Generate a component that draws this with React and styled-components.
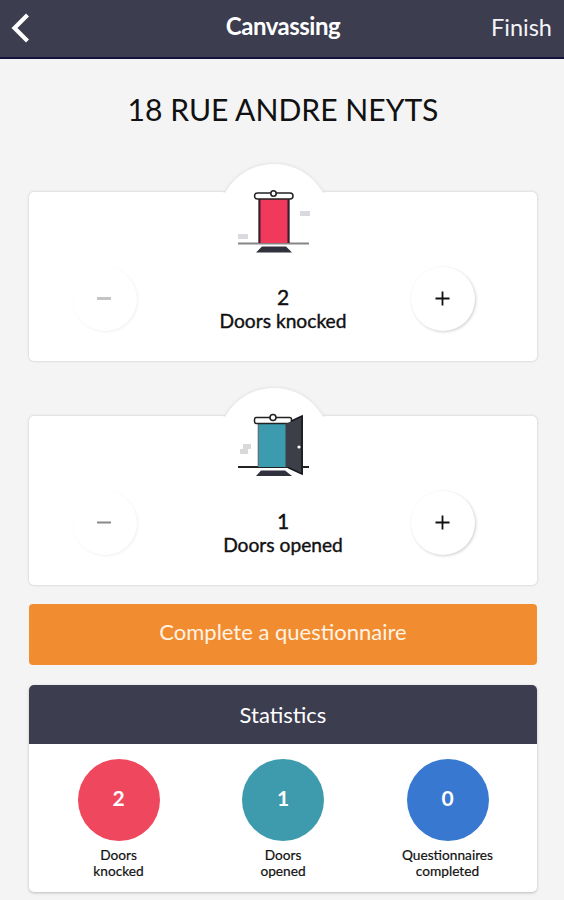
import React, { useState } from "react";
import styled, { createGlobalStyle } from "styled-components";

const GlobalStyle = createGlobalStyle`
  * {
    box-sizing: border-box;
  }
  body {
    margin: 0;
    background: #f4f4f4;
    color: #111;
    font-family: "Lato", "Liberation Sans", sans-serif;
  }
  button {
    font-family: inherit;
    border: none;
    padding: 0;
    cursor: pointer;
  }
`;

const Page = styled.div`
  height: 900px;
  overflow: hidden;
`;
const Header = styled.header`
  display: grid;
  grid-template-columns: 1fr auto 1fr;
  height: 59px;
  padding: 0 12px 0 11px;
  background: #3c3d4f;
  border-bottom: 2px solid #14123c;
  color: #fff;
`;
const BackButton = styled.button`
  justify-self: start;
  height: 55px;
  background: none;

  svg {
    display: block;
  }
`;
const HeaderTitle = styled.h1`
  margin: 0;
  padding-left: 3px;
  font-size: 24px;
  line-height: 51px;
  font-weight: 700;
  letter-spacing: -0.5px;
`;
const FinishButton = styled.button`
  justify-self: end;
  height: 54px;
  background: none;
  color: #f4f4fa;
  font-size: 23.5px;
  line-height: 54px;
`;
const Content = styled.main`
  padding: 0 27px 0 29px;
`;
const Address = styled.h2`
  margin: 0;
  height: 133px;
  font-size: 30.1px;
  line-height: 101px;
  font-weight: 400;
  text-align: center;
`;
const Card = styled.section`
  position: relative;
  height: 169px;
  margin-bottom: ${(props) => props.$gap}px;
  background: #fff;
  border-radius: 5px;
  box-shadow: 0 0 2px 1px #dedede;
`;
const Bubble = styled.div`
  position: absolute;
  top: -30px;
  left: 183px;
  width: 124px;
  height: 31px;
  overflow: hidden;

  &::before {
    content: "";
    display: block;
    width: 112px;
    height: 112px;
    margin: 2px auto 0;
    border-radius: 50%;
    background: #fff;
    box-shadow: 0 0 3px 1px #e4e4e4;
  }
`;
const DoorIcon = styled.svg`
  position: relative;
  display: block;
  margin: 0 auto;
  left: -9px;
  top: -5px;
`;
const CounterRow = styled.div`
  display: grid;
  grid-template-columns: 64px 1fr 64px;
  align-items: start;
  padding: 7px 62px 0 44px;
`;
const RoundButton = styled.button`
  display: flex;
  align-items: center;
  justify-content: center;
  width: 64px;
  height: 64px;
  border-radius: 50%;
  background: #fff;
  box-shadow: 1px 1px 3px ${(props) => (props.$faded ? "#f0f0f0" : "#cfcfcf")};
`;
const Counter = styled.div`
  padding: 18px 0 0 18px;
  text-align: center;
  font-size: 19.2px;
  line-height: 23px;
  color: #111;
  -webkit-text-stroke: 0.4px #111;
`;
const CounterValue = styled.div`
  font-size: 21px;
  line-height: 24px;
`;
const Questionnaire = styled.button`
  display: block;
  width: 100%;
  height: 61px;
  margin-bottom: 20px;
  padding-bottom: 6px;
  border-radius: 4px;
  background: #f28c30;
  color: #fff3e4;
  font-size: 22px;
`;
const Stats = styled.section`
  height: 207px;
  border-radius: 5px;
  background: #fff;
  box-shadow: 0 1px 3px #bbb;
  overflow: hidden;
`;
const StatsTitle = styled.h3`
  margin: 0;
  height: 59px;
  background: #3c3d4f;
  color: #fff;
  font-size: 22px;
  line-height: 60px;
  font-weight: 400;
  text-align: center;
`;
const StatsList = styled.div`
  display: grid;
  grid-template-columns: repeat(3, 164.5px);
  justify-content: center;
  padding-top: 15px;
`;
const Stat = styled.div`
  display: flex;
  flex-direction: column;
  align-items: center;
`;
const StatCircle = styled.div`
  width: 82px;
  height: 82px;
  border-radius: 50%;
  background: ${(props) => props.$color};
  color: #fff;
  font-size: 21px;
  line-height: 78px;
  font-weight: 700;
  text-align: center;
`;
const StatLabel = styled.div`
  margin-top: 6px;
  font-size: 13.7px;
  line-height: 15.5px;
  text-align: center;
  white-space: pre-line;
  -webkit-text-stroke: 0.2px #111;
`;

function ClosedDoor() {
  return (
    <DoorIcon width="72" height="68" viewBox="238 187 72 68">
      <rect x="300" y="211" width="10" height="5" fill="#d9d9de" />
      <rect x="238" y="234" width="10" height="5" fill="#d9d9de" />
      <path d="M238 243.5h71" stroke="#858585" strokeWidth="2" />
      <rect x="258.5" y="198" width="31" height="45" fill="#f0395b" />
      <path d="M259.5 198v45M288.5 198v45" stroke="#262733" strokeWidth="2" />
      <rect x="254.5" y="193" width="38.5" height="6" rx="3" fill="#fff" stroke="#222" strokeWidth="1.5" />
      <circle cx="273.5" cy="193.5" r="2.7" fill="#fff" stroke="#222" strokeWidth="1.6" />
      <path d="M262 246.5h24l6 6h-36z" fill="#30313c" />
    </DoorIcon>
  );
}

function OpenDoor() {
  return (
    <DoorIcon width="72" height="68" viewBox="238 411 72 68">
      <path d="M243 444h8v5h-8zM240 449h8v5h-8z" fill="#d9d9dc" />
      <path d="M238 467h71" stroke="#222" strokeWidth="2" />
      <rect x="258" y="423" width="28" height="44" fill="#3c9bae" />
      <path d="M258.2 423v44" stroke="#667" strokeWidth="1" />
      <rect x="254.5" y="417.5" width="37" height="6" rx="2" fill="#fff" stroke="#222" strokeWidth="1.5" />
      <path d="M285.5 424l17.5-8.5v59l-17.5-8z" fill="#3d3f48" />
      <path d="M291 421.2l11-5.2v58l-14-6.5" fill="none" stroke="#181920" strokeWidth="1.6" />
      <circle cx="299" cy="447" r="1.6" fill="#fff" />
      <circle cx="273" cy="417.5" r="3" fill="#fff" stroke="#222" strokeWidth="1.6" />
      <path d="M261 470.5h24l7 5.5h-36z" fill="#30313c" />
    </DoorIcon>
  );
}

function CounterCard({ icon, label, value, gap, minusColor, minusWidth, onChange }) {
  return (
    <Card $gap={gap}>
      <Bubble />
      {icon}
      <CounterRow>
        <RoundButton $faded aria-label="Remove" onClick={() => onChange(Math.max(0, value - 1))}>
          <svg width="16" height="16" viewBox="0 0 16 16">
            <path d="M0 7.5h14" stroke={minusColor} strokeWidth={minusWidth} />
          </svg>
        </RoundButton>
        <Counter>
          <CounterValue>{value}</CounterValue>
          {label}
        </Counter>
        <RoundButton aria-label="Add" onClick={() => onChange(value + 1)}>
          <svg width="16" height="16" viewBox="0 0 16 16">
            <path d="M.5 7.5h14M7.5 .5v14" stroke="#111" strokeWidth="1.8" />
          </svg>
        </RoundButton>
      </CounterRow>
    </Card>
  );
}

function App() {
  const [knocked, setKnocked] = useState(2);
  const [opened, setOpened] = useState(1);

  const stats = [
    { label: "Doors\nknocked", value: knocked, color: "#ef475d" },
    { label: "Doors\nopened", value: opened, color: "#3d9bad" },
    { label: "Questionnaires\ncompleted", value: 0, color: "#3978d0" },
  ];

  return (
    <Page>
      <GlobalStyle />
      <Header>
        <BackButton aria-label="Back">
          <svg width="20" height="32" viewBox="0 0 20 32">
            <path d="M16.5 3L3.5 16L16.5 29" fill="none" stroke="#fff" strokeWidth="4.2" />
          </svg>
        </BackButton>
        <HeaderTitle>Canvassing</HeaderTitle>
        <FinishButton>Finish</FinishButton>
      </Header>
      <Content>
        <Address>18 RUE ANDRE NEYTS</Address>
        <CounterCard
          icon={<ClosedDoor />}
          label="Doors knocked"
          value={knocked}
          gap={55}
          minusColor="#c4c4c4"
          minusWidth={3}
          onChange={setKnocked}
        />
        <CounterCard
          icon={<OpenDoor />}
          label="Doors opened"
          value={opened}
          gap={19}
          minusColor="#8a8a8a"
          minusWidth={2}
          onChange={setOpened}
        />
        <Questionnaire>Complete a questionnaire</Questionnaire>
        <Stats>
          <StatsTitle>Statistics</StatsTitle>
          <StatsList>
            {stats.map((stat) => (
              <Stat key={stat.label}>
                <StatCircle $color={stat.color}>{stat.value}</StatCircle>
                <StatLabel>{stat.label}</StatLabel>
              </Stat>
            ))}
          </StatsList>
        </Stats>
      </Content>
    </Page>
  );
}

export default App;
